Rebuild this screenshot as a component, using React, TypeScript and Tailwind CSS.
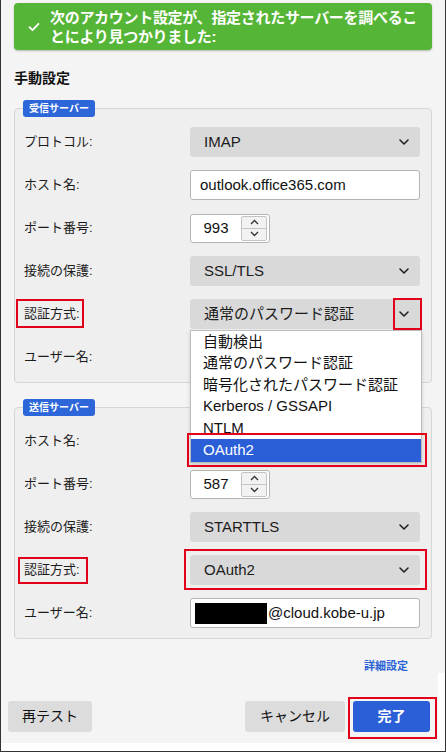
import React from "react";

const font = "font-['Liberation_Sans','Noto_Sans_CJK_JP',sans-serif]";

const Chevron = () => (
  <svg width="12" height="8" viewBox="0 0 12 8" fill="none">
    <path d="M2 2l4 4 4-4" stroke="#222" strokeWidth="1.6" strokeLinecap="round" strokeLinejoin="round" />
  </svg>
);

const Row = ({ label, children }: { label: string; children?: React.ReactNode }) => (
  <div className="flex items-center h-[30px]">
    <div className="w-[166px] text-[13px] text-[#1c1c1c]">{label}</div>
    <div className="flex-1">{children}</div>
  </div>
);

const Select = ({ value }: { value: string }) => (
  <div className="flex items-center justify-between h-[30px] bg-[#d9d9d9] rounded-[3px] pl-[14px] pr-[10px] text-[15px] text-[#1c1c1c]">
    <span>{value}</span>
    <Chevron />
  </div>
);

const TextInput = ({ children }: { children?: React.ReactNode }) => (
  <div className="flex items-center h-[30px] bg-white border border-[#b5b5b5] rounded-[3px] px-[9px] text-[15px] text-[#111]">
    {children}
  </div>
);

const NumberInput = ({ value }: { value: string }) => (
  <div className="flex items-center w-[80px] h-[29px] bg-white border border-[#b5b5b5] rounded-[3px]">
    <span className="flex-1 text-center text-[15px] text-[#111]">{value}</span>
    <div className="flex flex-col w-[26px] h-[25px] mr-[2px] border border-[#c4c4c4] rounded-[2px] bg-[#f2f2f2]">
      <div className="flex-1 flex items-center justify-center border-b border-[#c4c4c4]">
        <svg width="9" height="6" viewBox="0 0 9 6"><path d="M1 5l3.5-3.5L8 5" stroke="#333" strokeWidth="1.3" fill="none" /></svg>
      </div>
      <div className="flex-1 flex items-center justify-center">
        <svg width="9" height="6" viewBox="0 0 9 6"><path d="M1 1l3.5 3.5L8 1" stroke="#333" strokeWidth="1.3" fill="none" /></svg>
      </div>
    </div>
  </div>
);

const Fieldset = ({ legend, children }: { legend: string; children: React.ReactNode }) => (
  <div className="relative mx-[13px] border border-[#d6d6d6] rounded-[4px] bg-[#efefef] pt-[18px] pb-[10px] pl-[9px] pr-[11px]">
    <div className="absolute left-[8px] top-[-9px] bg-[#2d66d9] text-white text-[10px] font-bold rounded-[3px] px-[6px] h-[17px] flex items-center">
      {legend}
    </div>
    <div className="flex flex-col gap-[13px]">{children}</div>
  </div>
);

const RedBox = ({ cls }: { cls: string }) => (
  <div className={`absolute border-2 border-[#e3001b] ${cls}`} />
);

const options = ["自動検出", "通常のパスワード認証", "暗号化されたパスワード認証", "Kerberos / GSSAPI", "NTLM"];

export default function App() {
  return (
    <div className={`relative w-[446px] h-[752px] bg-white border-l border-r border-b border-[#333] overflow-hidden ${font}`}>
      <div className="bg-[#f4f4f4] pt-[3px]">
        <div className="mx-[13px] flex items-center bg-[#55b536] rounded-[4px] shadow-[0_1px_2px_rgba(0,0,0,0.25)] h-[47px] pl-[14px] pr-[6px]">
          <svg width="12" height="10" viewBox="0 0 12 10" className="shrink-0">
            <path d="M1.5 5.2l3 3L10.5 1.8" stroke="white" strokeWidth="1.8" fill="none" strokeLinecap="round" strokeLinejoin="round" />
          </svg>
          <p className="ml-[10px] text-white font-bold text-[15px] leading-[19px] tracking-[-0.3px]">
            次のアカウント設定が、指定されたサーバーを調べることにより見つかりました:
          </p>
        </div>

        <h2 className="mx-[13px] mt-[19px] text-[14px] font-bold text-[#111] leading-[18px]">手動設定</h2>

        <div className="mt-[21px]">
          <Fieldset legend="受信サーバー">
            <Row label="プロトコル:"><Select value="IMAP" /></Row>
            <Row label="ホスト名:"><TextInput>outlook.office365.com</TextInput></Row>
            <Row label="ポート番号:"><NumberInput value="993" /></Row>
            <Row label="接続の保護:"><Select value="SSL/TLS" /></Row>
            <Row label="認証方式:"><Select value="通常のパスワード認証" /></Row>
            <Row label="ユーザー名:"><TextInput /></Row>
          </Fieldset>
        </div>

        <div className="mt-[24px]">
          <Fieldset legend="送信サーバー">
            <Row label="ホスト名:"><TextInput /></Row>
            <Row label="ポート番号:"><NumberInput value="587" /></Row>
            <Row label="接続の保護:"><Select value="STARTTLS" /></Row>
            <Row label="認証方式:"><Select value="OAuth2" /></Row>
            <Row label="ユーザー名:">
              <TextInput>
                <span className="inline-block w-[72px] h-[21px] bg-black mr-[1px] -ml-[5px]" />
                <span>@cloud.kobe-u.jp</span>
              </TextInput>
            </Row>
          </Fieldset>
        </div>

        <div className="flex justify-end pr-[37px] pt-[20px] h-[34px]">
          <span className="text-[11px] font-bold text-[#2a62d4] leading-[14px]">詳細設定</span>
        </div>
      </div>

      <div className="bg-[#f4f4f4] mr-[7px] h-[70px] flex items-start pt-[28px] pl-[7px] pr-[8px]">
        <div className="w-[84px] h-[31px] bg-[#dcdcdc] rounded-[3px] flex items-center justify-center text-[14px] text-[#111]">再テスト</div>
        <div className="flex-1" />
        <div className="w-[100px] h-[31px] bg-[#dcdcdc] rounded-[3px] flex items-center justify-center text-[14px] text-[#111]">キャンセル</div>
        <div className="ml-[8px] w-[77px] h-[31px] bg-[#2a5fd8] rounded-[3px] flex items-center justify-center text-[14px] font-bold text-white">完了</div>
      </div>

      {/* open dropdown list */}
      <div className="absolute left-[189px] top-[330px] w-[232px] bg-white border border-[#bdbdbd] shadow-[0_2px_4px_rgba(0,0,0,0.15)] text-[15px] text-[#111]">
        {options.map((o) => (
          <div key={o} className="h-[21.5px] flex items-center pl-[12px]">{o}</div>
        ))}
        <div className="h-[23px] flex items-center pl-[12px] bg-[#2a5fd8] text-white">OAuth2</div>
      </div>

      {/* annotations */}
      <RedBox cls="left-[15px] top-[299px] w-[68px] h-[29px]" />
      <RedBox cls="left-[392px] top-[298px] w-[29px] h-[32px]" />
      <RedBox cls="left-[186px] top-[433px] w-[240px] h-[34px]" />
      <RedBox cls="left-[17px] top-[557px] w-[70px] h-[27px]" />
      <RedBox cls="left-[183px] top-[549px] w-[243px] h-[41px]" />
      <RedBox cls="left-[347px] top-[697px] w-[89px] h-[42px]" />
    </div>
  );
}
